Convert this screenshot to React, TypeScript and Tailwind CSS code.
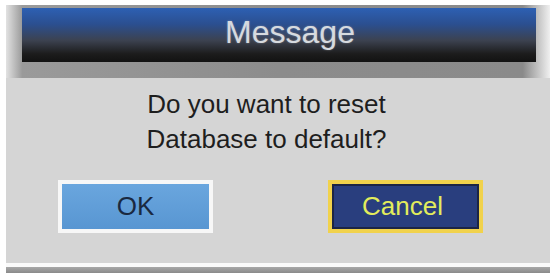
export default function App() {
  return (
    <div
      className="w-[554px] h-[273px] bg-white pt-[5px] pl-[6px] pr-[4px] overflow-hidden"
      style={{ fontFamily: '"Liberation Sans", Arial, sans-serif' }}
    >
      {/* header frame */}
      <div className="h-[73px] pt-[3px] pl-[16px] [background-image:linear-gradient(to_right,#e2e2e2_0%,#9a9a9a_3%,#8c8c8c_50%,#8a8a8a_95%,#f0f0f0_100%)]">
        <div className="w-[514px] h-[54px] [background-image:linear-gradient(to_bottom,#2d60b3_0%,#2b4f90_30%,#3c4250_60%,#1c1c1c_85%,#121212_100%)] pl-[22px] text-center text-[32px] leading-[48px] text-[#d6dadf] [text-shadow:0_0_2px_rgba(255,255,255,0.35)]">
          Message
        </div>
      </div>

      {/* body */}
      <div className="h-[185px] bg-[#d5d5d5] pt-[9px] flex flex-col items-center">
        <div className="pr-[23px] text-[26px] leading-[35px] text-[#1e1e1e] text-center">
          <div>Do you want to reset</div>
          <div>Database to default?</div>
        </div>
        <div className="mt-[23px] w-full flex pl-[52px] gap-[115px]">
          <div className="w-[155px] h-[53px] bg-[#f7f7f7] p-[4px]">
            <div className="w-full h-full bg-gradient-to-b from-[#6aa6de] to-[#5896d2] flex items-center justify-center text-[26px] text-[#1a2940]">
              OK
            </div>
          </div>
          <div className="w-[155px] h-[53px] bg-[#f1d24c] p-[4px]">
            <div className="w-full h-full border-[2px] border-[#1c2545] bg-[#293e7e] flex items-center justify-center pr-[6px] text-[26px] text-[#e2ec5c]">
              Cancel
            </div>
          </div>
        </div>
      </div>

      {/* bottom edge */}
      <div className="h-[4px] bg-[#fafafa]" />
      <div className="h-[6px] bg-gradient-to-b from-[#a8a8a8] to-[#8a8a8a]" />
    </div>
  );
}
